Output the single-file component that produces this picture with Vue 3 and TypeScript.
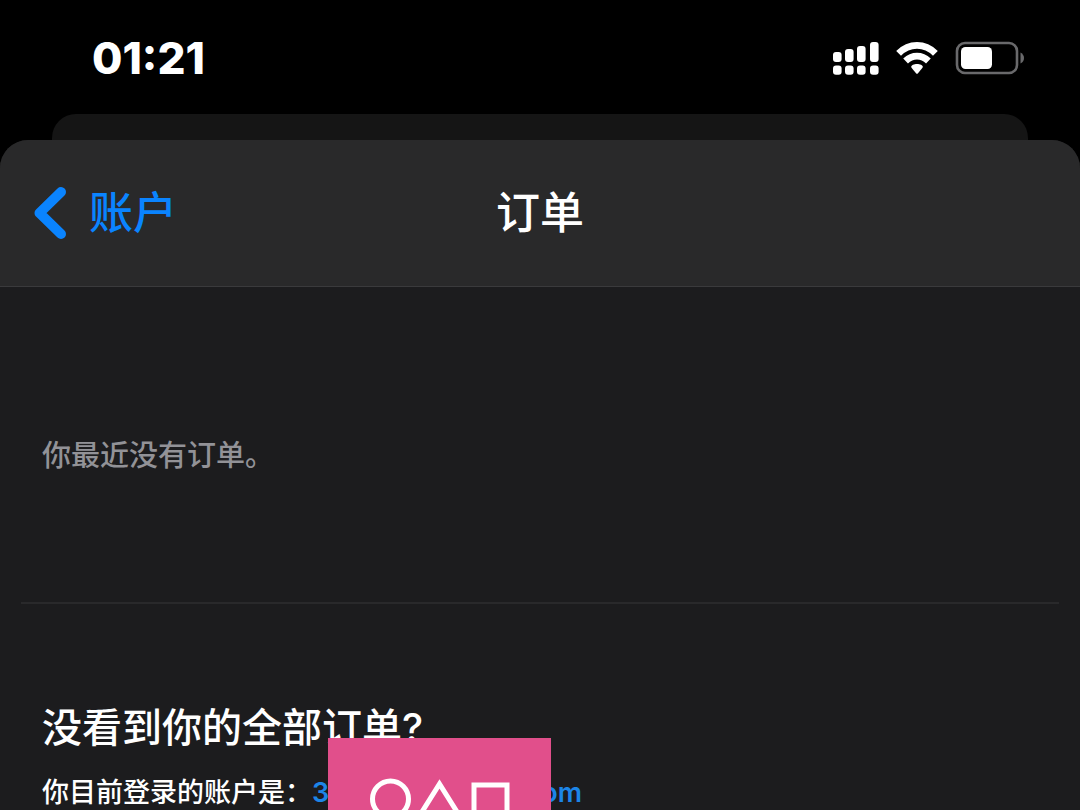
<script setup lang="ts">
import { ref } from 'vue'

const time = ref('01:21')
const title = ref('订单')
const signalBars = [
  { x: 0, height: 10 },
  { x: 12, height: 13 },
  { x: 24, height: 16 },
  { x: 37, height: 20 },
]
</script>

<template>
  <div class="screen">
    <header class="status">
      <time class="clock">{{ time }}</time>
      <div class="indicators">
        <svg class="signal" width="46" height="34" viewBox="0 0 46 34" role="img" aria-label="Signal">
          <g fill="#fff">
            <template v-for="bar in signalBars" :key="bar.x">
              <rect :x="bar.x" :y="21 - bar.height" width="8.6" :height="bar.height" rx="3" />
              <rect :x="bar.x" y="24.4" width="8.6" height="9.4" rx="3" />
            </template>
          </g>
        </svg>
        <svg class="wifi" width="42" height="34" viewBox="0 0 42 34" role="img" aria-label="Wi-Fi">
          <g fill="none" stroke="#fff" stroke-width="6.8">
            <path d="M2.6 12.4C13.2 1.8 28.8 1.8 39.4 12.4" />
            <path d="M9.6 20C16.2 13.6 25.8 13.6 32.4 20" />
          </g>
          <path d="M15.200 26C15.200 22 26.800 22 26.800 26Q26.600 27 22 32.200Q21 33.200 20 32.200Q15.400 27 15.200 26Z" fill="#fff" />
        </svg>
        <svg class="battery" width="70" height="34" viewBox="0 0 70 34" role="img" aria-label="Battery">
          <rect x="2" y="2" width="60" height="30" rx="8" fill="none" stroke="#69696b" stroke-width="2.6" />
          <rect x="6" y="6" width="31" height="22" rx="4.5" fill="#fff" />
          <path d="M65.5 11.5Q69 13.5 69 17Q69 20.5 65.5 22.5Z" fill="#69696b" />
        </svg>
      </div>
    </header>

    <div class="back-card"></div>

    <main class="sheet">
      <nav class="navbar">
        <button class="back" type="button">
          <svg width="34" height="54" viewBox="0 0 34 54" aria-hidden="true">
            <path d="M28 6L6.5 27L28 48" fill="none" stroke="#0a84ff" stroke-width="10" stroke-linecap="round" stroke-linejoin="round" />
          </svg>
          <span>账户</span>
        </button>
        <h1 class="title">{{ title }}</h1>
      </nav>

      <p class="empty">你最近没有订单。</p>

      <section class="missing">
        <h2>没看到你的全部订单?</h2>
        <p class="account">
          <span>你目前登录的账户是：</span>
          <a class="email" href="#"><span>3</span><span>om</span></a>
        </p>
        <svg class="sticker" width="223" height="88" viewBox="0 0 223 88" aria-hidden="true">
          <rect width="223" height="88" fill="#e14f8b" />
          <g fill="none" stroke="#fff" stroke-width="5">
            <circle cx="62.5" cy="61" r="18" />
            <path d="M92 77L111.5 46L131 77Z" />
            <rect x="146" y="47" width="33" height="33" />
          </g>
        </svg>
      </section>
    </main>
  </div>
</template>

<style>
html,
body {
  margin: 0;
  background: #000;
}
</style>

<style scoped>
.screen {
  display: flex;
  flex-direction: column;
  height: 100vh;
  overflow: hidden;
  background: #000;
  color: #fff;
  font-family: Inter, "Noto Sans CJK SC", sans-serif;
  font-weight: 500;
}

.status {
  display: flex;
  flex: none;
  align-items: center;
  justify-content: space-between;
  height: 114px;
  padding: 2px 55px 0 92px;
  box-sizing: border-box;
}

.clock {
  font-size: 44px;
  line-height: 50px;
  font-weight: 800;
}

.indicators {
  display: flex;
  align-items: center;
  gap: 17px;
}

.back-card {
  flex: none;
  height: 26px;
  margin: 0 52px;
  border-radius: 24px 24px 0 0;
  background: #151515;
}

.sheet {
  flex: 1 0 auto;
  overflow: hidden;
  border-radius: 28px 28px 0 0;
  background: #1c1c1e;
}

.navbar {
  display: grid;
  grid-template-columns: 1fr auto 1fr;
  align-items: center;
  height: 147px;
  padding: 0 33px;
  box-sizing: border-box;
  border-bottom: 1px solid #3a3a3c;
  background: #29292a;
}

.back {
  display: flex;
  align-items: center;
  justify-self: start;
  gap: 22px;
  padding: 0;
  border: 0;
  background: none;
  color: #0a84ff;
  font: inherit;
  font-size: 44px;
  line-height: 60px;
  cursor: pointer;
}

.title {
  margin: 0;
  font-size: 44px;
  line-height: 60px;
  font-weight: 500;
}

.empty {
  margin: 0 21px;
  padding: 148px 21px 125px;
  border-bottom: 2px solid #29292b;
  color: #929297;
  font-size: 29px;
  line-height: 42px;
}

.missing {
  position: relative;
  padding: 95px 42px 0;
}

h2 {
  margin: 0;
  font-size: 40px;
  line-height: 58px;
  font-weight: 500;
}

.account {
  display: flex;
  margin: 16px 0 0;
  font-size: 27px;
  line-height: 40px;
}

.email {
  display: flex;
  justify-content: space-between;
  width: 270px;
  color: #1c85e8;
  font-weight: 600;
  text-decoration: none;
}

.sticker {
  position: absolute;
  top: 134px;
  left: 328px;
}
</style>
